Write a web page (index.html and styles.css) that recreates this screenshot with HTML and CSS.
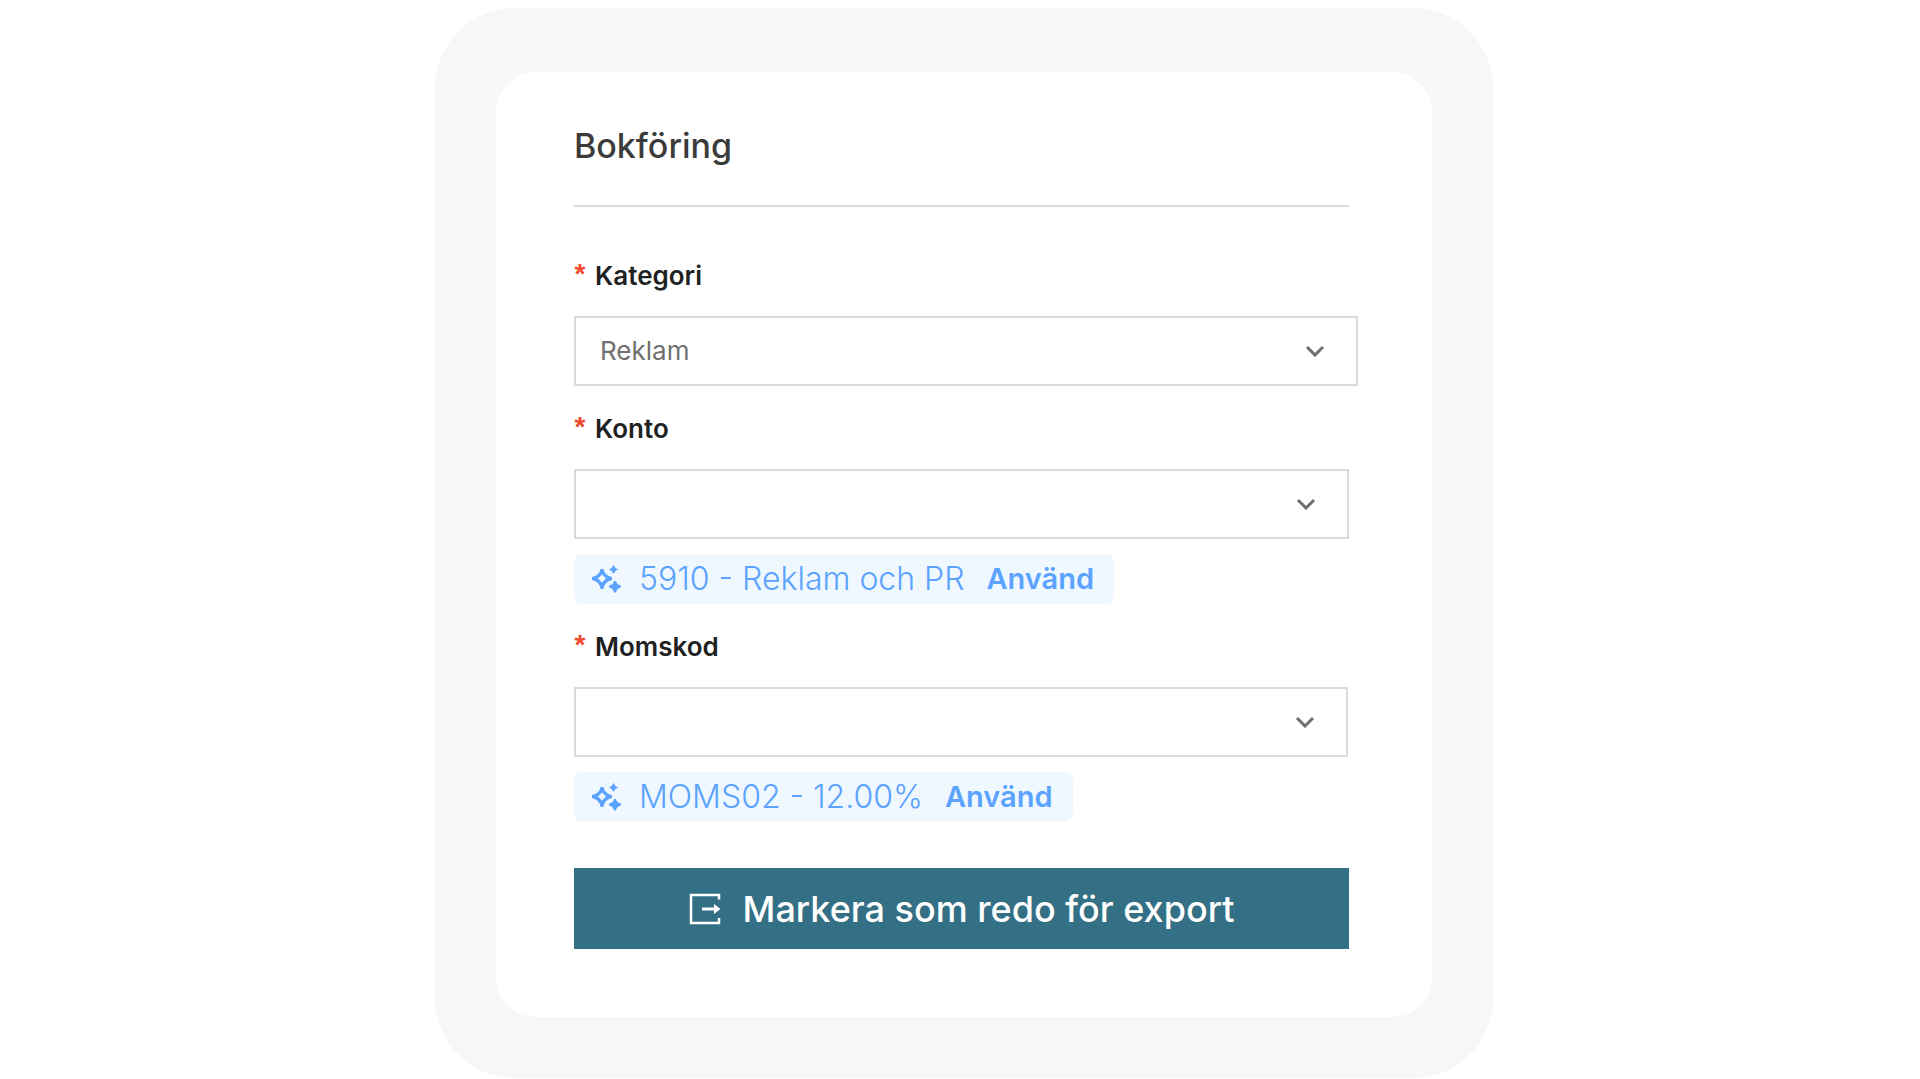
FILE: index.html
```html
<!DOCTYPE html>
<html lang="sv">
<head>
<meta charset="utf-8">
<meta name="viewport" content="width=device-width, initial-scale=1">
<title>Bokföring</title>
<link rel="stylesheet" href="styles.css">
</head>
<body>
<svg class="icon-defs" aria-hidden="true">
  <symbol id="chevron" viewBox="0 0 20 12"><path d="M2 2l8 8 8-8" fill="none" stroke="currentColor" stroke-width="3"/></symbol>
  <symbol id="sparkles" viewBox="0 0 30 30">
    <path fill="currentColor" fill-rule="evenodd" d="M9.500 5h3q1 6.500 8.500 8v3q-7.500 1.500-8.500 9h-3q-1-7.500-8.500-9v-3q7.500-1.500 8.500-8zM11 10.500l-4 4 4 4 4-4z"/>
    <path fill="currentColor" d="M22.500 1q1.300 3.200 4.500 4.500-3.200 1.300-4.500 4.500-1.300-3.200-4.500-4.500 3.200-1.300 4.500-4.500zM23 17h2q.8 3.700 5 4.500v2q-4.200.8-5 5h-2q-.8-4.200-5-5v-2q4.200-.8 5-4.500z"/>
  </symbol>
</svg>
<main class="frame">
  <form class="card">
    <h1 class="title">Bokföring</h1>

    <div class="field">
      <label class="label" for="category"><span class="required">*</span>Kategori</label>
      <div class="select select-wide">
        <select id="category" class="select-input"><option>Reklam</option></select>
        <svg class="chevron" aria-hidden="true"><use href="#chevron"/></svg>
      </div>
    </div>

    <div class="field">
      <label class="label" for="account"><span class="required">*</span>Konto</label>
      <div class="select">
        <select id="account" class="select-input"><option></option></select>
        <svg class="chevron" aria-hidden="true"><use href="#chevron"/></svg>
      </div>
      <div class="suggestion">
        <svg class="sparkles" aria-hidden="true"><use href="#sparkles"/></svg>
        <span>5910 - Reklam och PR</span>
        <button class="use" type="button">Använd</button>
      </div>
    </div>

    <div class="field">
      <label class="label" for="vat"><span class="required">*</span>Momskod</label>
      <div class="select select-narrow">
        <select id="vat" class="select-input"><option></option></select>
        <svg class="chevron" aria-hidden="true"><use href="#chevron"/></svg>
      </div>
      <div class="suggestion">
        <svg class="sparkles" aria-hidden="true"><use href="#sparkles"/></svg>
        <span>MOMS02 - 12.00%</span>
        <button class="use" type="button">Använd</button>
      </div>
    </div>

    <button class="submit" type="button">
      <svg class="export" viewBox="0 0 32 32" aria-hidden="true">
        <path d="M30 6.500V2H2v28h28V25" fill="none" stroke="currentColor" stroke-width="2.500"/>
        <path d="M13 14.500h12V11l6.500 5-6.500 5v-3.500H13z" fill="currentColor"/>
      </svg>
      <span>Markera som redo för export</span>
    </button>
  </form>
</main>
</body>
</html>
```
FILE: styles.css
```css
*,
*::before,
*::after {
  box-sizing: border-box;
}

body {
  margin: 8px 0 0 8px;
  background: #fff;
  color: #202221;
  font-family: Inter, "Liberation Sans", sans-serif;
}

button,
select {
  font: inherit;
}

.icon-defs {
  display: none;
}

.frame {
  max-width: 1058px;
  margin: 0 auto;
  padding: 64px 61px 61px;
  border-radius: 80px;
  background: #f7f7f7;
}

.card {
  padding: 54px 83px 68px 78px;
  border-radius: 40px;
  background: #fff;
}

.title {
  margin: 0 0 53px;
  padding-bottom: 39px;
  border-bottom: 2px solid #dbdbdb;
  color: #3b3b3b;
  font-size: 34px;
  font-weight: 500;
  line-height: 40px;
}

.field {
  margin-bottom: 27px;
}

.label {
  display: flex;
  gap: 9px;
  margin-bottom: 24px;
  font-size: 26px;
  font-weight: 600;
  line-height: 32px;
}

.required {
  width: 12px;
  color: #f04a2c;
  font-family: "Liberation Sans", sans-serif;
  font-size: 28px;
  line-height: 28px;
  text-align: center;
}

.select {
  display: grid;
  align-items: center;
}

.select-wide {
  margin-right: -9px;
}

.select-narrow {
  margin-right: 1px;
}

.select-input {
  grid-area: 1 / 1;
  width: 100%;
  height: 70px;
  padding: 0 64px 2px 24px;
  appearance: none;
  border: 2px solid #dbdbdb;
  border-radius: 0;
  background: #fff;
  color: #707070;
  font-size: 26px;
}

.chevron {
  grid-area: 1 / 1;
  justify-self: end;
  width: 20px;
  height: 12px;
  margin-right: 33px;
  color: #6e6e6e;
  pointer-events: none;
}

.suggestion {
  display: flex;
  align-items: center;
  width: fit-content;
  height: 50px;
  margin-top: 15px;
  padding: 0 20px 0 17px;
  border-radius: 8px;
  background: #f0f8ff;
  color: #5ba3ff;
  font-size: 32px;
  font-weight: 300;
  line-height: 40px;
}

.sparkles {
  width: 30px;
  height: 30px;
  margin-right: 18px;
}

.use {
  margin-left: 22px;
  padding: 0;
  border: 0;
  background: none;
  color: inherit;
  font-size: 29px;
  font-weight: 600;
}

.submit {
  display: flex;
  align-items: center;
  justify-content: center;
  gap: 22px;
  width: 100%;
  height: 81px;
  margin-top: 46px;
  border: 0;
  background: #347085;
  color: #fff;
  font-size: 36px;
  font-weight: 500;
}

.export {
  width: 32px;
  height: 32px;
}
```
